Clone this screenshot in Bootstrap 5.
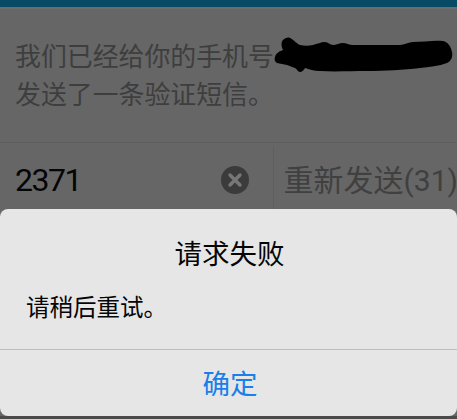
<!doctype html>
<html lang="zh">
<head>
<meta charset="utf-8">
<title>请求失败</title>
<link href="https://cdn.jsdelivr.net/npm/bootstrap@5.3.0/dist/css/bootstrap.min.css" rel="stylesheet">
<style>
html,body{height:100%;overflow:hidden}
body{background:#666;font-family:"Roboto","Noto Sans CJK SC",sans-serif;position:relative}
.topbar{height:7px;background:#064a66;box-shadow:0 2px 0 #6e6c68}
.msg{height:136px;padding:31px 0 0 15px;font-size:25.9px;line-height:38px;color:#3e3e3e;border-bottom:1px solid #5e5e5e}
.msg-line{height:38px;white-space:nowrap}
.blob{position:absolute;left:274px;top:37px}
.entry{height:70px;padding-top:4px}
.code-cell{width:275px;padding:0 24px 0 15px;border-right:1px solid #5e5e5e}
.code{font-size:32px;color:#050505;letter-spacing:-1.5px}
.clear{width:28px;height:28px;flex:none}
.resend{padding-left:10px;font-size:30px;color:#404040;white-space:nowrap;overflow:hidden}
.sheet{position:absolute;left:0;right:0;top:209px;height:207px;background:#e6e6e6;border-radius:8px;color:#050505}
.sheet-title{height:91px;padding:26px 0 0 2px;font-size:27.5px;line-height:40px;text-align:center}
.sheet-body{height:49px;padding-left:26px;font-size:23.5px;line-height:34px;margin-top:-9px;margin-bottom:9px}
.sheet-btn{height:67px;border-top:1px solid #bdbdbd;color:#1a7fe8;font-size:27.5px;background:none;border-left:0;border-right:0;border-bottom:0;width:100%;padding:4px 0 0 3px}
.foot{position:absolute;left:0;right:0;top:416px;height:3px;background:#4a4a4a}
</style>
</head>
<body>
<div class="topbar"></div>
<div class="msg">
  <div class="msg-line">我们已经给你的手机号</div>
  <div class="msg-line">发送了一条验证短信。</div>
</div>
<svg class="blob" width="180" height="36" viewBox="0 0 180 36" aria-hidden="true"><path d="M1 20C2 16 6 14 9 13C7 9 7 5 9 3C11 1 14 0 16 1C20 3 23 7 26 8C30 9 35 9 39 8C43 7 47 5 51 5C54 5 56 8 59 8C62 8 66 6 69 6C72 6 75 8 79 8L126 8C130 8 135 5 139 5C148 5 160 3 169 4C174 5 177 10 178 15C179 20 177 24 173 26C165 29 155 30 146 31C130 33 110 34 93 34C77 34 60 35 46 34C40 34 35 32 31 31C30 33 28 35 26 35C24 35 23 32 21 31C18 30 16 29 13 28C10 27 6 27 3 26C1 25 0 22 1 20Z" fill="#000"/></svg>
<div class="entry d-flex">
  <div class="code-cell d-flex align-items-center justify-content-between">
    <span class="code">2371</span>
    <svg class="clear" viewBox="0 0 28 28" aria-hidden="true"><circle cx="14" cy="14" r="14" fill="#3b3b3b"/><path d="M9 9L19 19M19 9L9 19" stroke="#777" stroke-width="3.4" stroke-linecap="round"/></svg>
  </div>
  <div class="resend d-flex align-items-center">重新发送(31)</div>
</div>
<div class="sheet d-flex flex-column">
  <div class="sheet-title">请求失败</div>
  <div class="sheet-body">请稍后重试。</div>
  <button type="button" class="sheet-btn">确定</button>
</div>
<div class="foot"></div>
</body>
</html>
